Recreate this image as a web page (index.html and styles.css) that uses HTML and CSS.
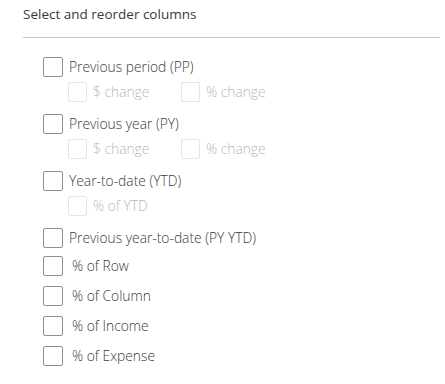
FILE: index.html
```html
<!DOCTYPE html>
<html>
<head>
<meta charset="utf-8">
<link rel="stylesheet" href="styles.css">
</head>
<body>
<div class="panel">
  <h2 class="title">Select and reorder columns</h2>
  <div class="divider"></div>
  <ul class="options">
    <li class="group">
      <label class="opt"><span class="box"></span><span class="lbl">Previous period (PP)</span></label>
      <div class="subs">
        <label class="sub"><span class="box dis"></span><span class="lbl">$ change</span></label>
        <label class="sub"><span class="box dis"></span><span class="lbl">% change</span></label>
      </div>
    </li>
    <li class="group">
      <label class="opt"><span class="box"></span><span class="lbl">Previous year (PY)</span></label>
      <div class="subs">
        <label class="sub"><span class="box dis"></span><span class="lbl">$ change</span></label>
        <label class="sub"><span class="box dis"></span><span class="lbl">% change</span></label>
      </div>
    </li>
    <li class="group">
      <label class="opt"><span class="box"></span><span class="lbl">Year-to-date (YTD)</span></label>
      <div class="subs">
        <label class="sub"><span class="box dis"></span><span class="lbl">% of YTD</span></label>
      </div>
    </li>
    <li class="group last">
      <label class="opt"><span class="box"></span><span class="lbl">Previous year-to-date (PY YTD)</span></label>
    </li>
    <li class="simple"><label class="opt"><span class="box"></span><span class="lbl pct">% of Row</span></label></li>
    <li class="simple"><label class="opt"><span class="box"></span><span class="lbl pct">% of Column</span></label></li>
    <li class="simple"><label class="opt"><span class="box"></span><span class="lbl pct">% of Income</span></label></li>
    <li class="simple"><label class="opt"><span class="box"></span><span class="lbl pct">% of Expense</span></label></li>
  </ul>
</div>
</body>
</html>
```

FILE: styles.css
```css
* { box-sizing: border-box; }
html, body { margin: 0; padding: 0; background: #fff; }
body { font-family: "Open Sans", "Noto Sans", sans-serif; color: #393a3d; }
.panel { padding: 5px 5px 0 23px; }
.title {
  margin: 0;
  font-size: 13.5px;
  font-weight: 400;
  line-height: 18px;
  color: #393a3d;
}
.divider { height: 1px; background: #c6c6c6; margin-top: 14px; }
.options { list-style: none; margin: 0; padding: 19px 0 0 20px; }
.group { display: flex; flex-direction: column; margin-bottom: 12px; }
.group.last { margin-bottom: 8px; }
.simple { margin-bottom: 10px; }
.opt { display: flex; align-items: center; gap: 6px; height: 20px; }
.subs { display: flex; gap: 0; margin: 5px 0 0 25px; height: 20px; }
.sub { display: flex; align-items: center; gap: 6px; width: 113px; height: 20px; }
.box {
  width: 20px; height: 20px; flex: none;
  border: 1px solid #8d9096; border-radius: 2px; background: #fff;
}
.box.dis { border-color: #e3e5e8; width: 19px; height: 20px; }
.lbl {
  font-family: "Open Sans", "Noto Sans", sans-serif;
  font-size: 13.8px; font-weight: 300; line-height: 20px; color: #393a3d;
}
.lbl.pct { margin-left: 3px; }
.sub .lbl { color: #b6b9bf; }
```
